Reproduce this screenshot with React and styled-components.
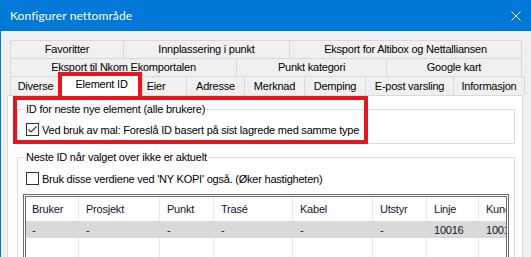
import React from 'react';
import styled, { createGlobalStyle } from 'styled-components';

const GlobalStyle = createGlobalStyle`
  html, body {
    margin: 0;
    padding: 0;
    background: #f0f0f0;
    overflow: hidden;
  }
`;

const Window = styled.div`
  width: 531px;
  height: 257px;
  box-sizing: border-box;
  overflow: hidden;
  position: relative;
  background: #f0f0f0;
  border-left: 1px solid #0078d7;
  font-family: "Liberation Sans", Arial, sans-serif;
  font-size: 11px;
  letter-spacing: -0.22px;
  color: #000;
`;

const TitleBar = styled.div`
  height: 31px;
  background: #0078d7;
  color: #fff;
  display: flex;
  align-items: center;
  justify-content: space-between;
  padding: 0 10px 0 9px;
  font-family: Lato, "Noto Sans", sans-serif;
  font-size: 12px;
  letter-spacing: 0.1px;
`;

const Title = styled.span`
  line-height: 14px;
  white-space: nowrap;
`;

const Body = styled.div`
  padding: 9px 0 0 6px;
`;

const TabStrip = styled.div`
  margin-left: 3px;
  width: 512px;
  display: flex;
  flex-direction: column;
`;

const TabRow = styled.div`
  display: flex;
  height: ${(p) => (p.$last ? 19 : 18)}px;
`;

const Tab = styled.div`
  flex: none;
  width: ${(p) => p.$w}px;
  height: 100%;
  box-sizing: border-box;
  border: 1px solid #d9d9d9;
  border-bottom: none;
  background: #f0f0f0;
  display: flex;
  align-items: center;
  justify-content: center;
  padding-right: ${(p) => p.$pr || 0}px;
  white-space: nowrap;
  line-height: 13px;

  & + & {
    margin-left: -1px;
  }
`;

const ActiveTab = styled(Tab)`
  position: relative;
  z-index: 1;
  background: #fff;
  height: 24px;
  margin: -4px -2px -1px -3px;
  width: ${(p) => p.$w + 4}px;

  & + ${Tab} {
    margin-left: 0;
  }
`;

const Panel = styled.div`
  width: 516px;
  height: 200px;
  box-sizing: border-box;
  border: 1px solid #d9d9d9;
  background: #fff;
`;

const GroupBox = styled.fieldset`
  margin: 6px 7px 0 9px;
  padding: 0 0 ${(p) => p.$pb || 0}px 5px;
  border: 1px solid #dcdcdc;
  min-width: 0;
`;

const Legend = styled.legend`
  margin-left: 2px;
  padding: 0 1px;
  line-height: 14px;
  white-space: nowrap;
`;

const CheckRow = styled.label`
  display: flex;
  align-items: center;
  gap: 3px;
  height: 13px;
  margin: ${(p) => p.$mt}px 0 0 3px;
  white-space: nowrap;
  line-height: 14px;
`;

const Box = styled.span`
  width: 13px;
  height: 13px;
  box-sizing: border-box;
  border: 1px solid #333;
  background: #fff;
  display: flex;
  align-items: center;
  justify-content: center;
  flex: none;
`;

const ListView = styled.div`
  margin: 9px 5px 0 0;
  height: 90px;
  border: 3px double #6b6b6b;
  overflow: hidden;
  color: #141432;
`;

const ListRow = styled.div`
  display: grid;
  grid-template-columns: 53px 81px 54px 79px 80px 54px 52px 60px;
  height: ${(p) => p.$h}px;
  background: ${(p) => (p.$sel ? '#d9d9d9' : 'transparent')};
`;

const Cell = styled.div`
  border-right: 1px solid ${(p) => (p.$sel ? '#d9d9d9' : '#e3eaf4')};
  padding-left: ${(p) => (p.$first ? 6 : 7)}px;
  display: flex;
  align-items: center;
  white-space: nowrap;
  overflow: hidden;
  line-height: 14px;
`;

const Highlight = styled.div`
  position: absolute;
  left: ${(p) => p.$x}px;
  top: ${(p) => p.$y}px;
  width: ${(p) => p.$w}px;
  height: ${(p) => p.$h}px;
  box-sizing: border-box;
  border: 4px solid #e8141e;
  pointer-events: none;
  z-index: 5;
`;

const rows = [
  [
    { label: 'Favoritter', w: 114 },
    { label: 'Innplassering i punkt', w: 167 },
    { label: 'Eksport for Altibox og Nettalliansen', w: 233 },
  ],
  [
    { label: 'Eksport til Nkom Ekomportalen', w: 227 },
    { label: 'Punkt kategori', w: 151 },
    { label: 'Google kart', w: 136 },
  ],
  [
    { label: 'Diverse', w: 51 },
    { label: 'Element ID', w: 79, active: true },
    { label: 'Eier', w: 46, pr: 16 },
    { label: 'Adresse', w: 59 },
    { label: 'Merknad', w: 61 },
    { label: 'Demping', w: 62 },
    { label: 'E-post varsling', w: 89 },
    { label: 'Informasjon', w: 72 },
  ],
];

const columns = ['Bruker', 'Prosjekt', 'Punkt', 'Trasé', 'Kabel', 'Utstyr', 'Linje', 'Kunde'];
const values = ['-', '-', '-', '-', '-', '-', '10016', '10016'];

const CloseIcon = () => (
  <svg width="10" height="10" viewBox="0 0 10 10">
    <path d="M0.5 0.5 L9.5 9.5 M9.5 0.5 L0.5 9.5" stroke="#fff" strokeWidth="1" fill="none" />
  </svg>
);

const CheckMark = () => (
  <svg width="11" height="11" viewBox="0 0 11 11">
    <path d="M1.5 5.5 L4 8 L9.5 2.5" stroke="#333" strokeWidth="1.2" fill="none" />
  </svg>
);

const App = () => (
  <Window>
    <GlobalStyle />
    <TitleBar>
      <Title>Konfigurer nettområde</Title>
      <CloseIcon />
    </TitleBar>
    <Body>
      <TabStrip>
        {rows.map((row, i) => (
          <TabRow key={i} $last={i === rows.length - 1}>
            {row.map((t) => (t.active ? (
              <ActiveTab key={t.label} $w={t.w}>{t.label}</ActiveTab>
            ) : (
              <Tab key={t.label} $w={t.w} $pr={t.pr}>{t.label}</Tab>
            )))}
          </TabRow>
        ))}
      </TabStrip>
      <Panel>
        <GroupBox $pb={7}>
          <Legend>ID for neste nye element (alle brukere)</Legend>
          <CheckRow $mt={7}>
            <Box><CheckMark /></Box>
            Ved bruk av mal: Foreslå ID basert på sist lagrede med samme type
          </CheckRow>
        </GroupBox>
        <GroupBox>
          <Legend>Neste ID når valget over ikke er aktuelt</Legend>
          <CheckRow $mt={8}>
            <Box />
            Bruk disse verdiene ved 'NY KOPI' også. (Øker hastigheten)
          </CheckRow>
          <ListView>
            <ListRow $h={24}>
              {columns.map((c, i) => (
                <Cell key={c} $first={i === 0}>{c}</Cell>
              ))}
            </ListRow>
            <ListRow $h={17} $sel>
              {values.map((v, i) => (
                <Cell key={i} $first={i === 0} $sel>{v}</Cell>
              ))}
            </ListRow>
            <ListRow $h={60}>
              {columns.map((c, i) => (
                <Cell key={c} $first={i === 0} />
              ))}
            </ListRow>
          </ListView>
        </GroupBox>
      </Panel>
    </Body>
    <Highlight $x={57} $y={72} $w={84} $h={28} />
    <Highlight $x={12} $y={96} $w={355} $h={48} />
  </Window>
);

export default App;
